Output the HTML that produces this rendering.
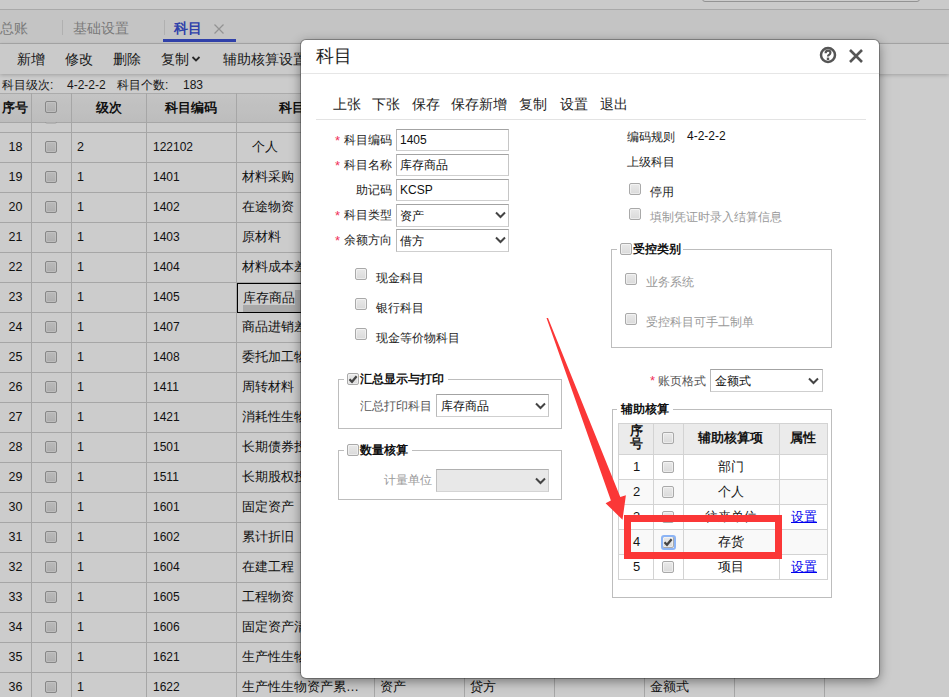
<!DOCTYPE html><html><head><meta charset="utf-8"><style>
*{margin:0;padding:0;box-sizing:border-box}
html,body{width:949px;height:697px;overflow:hidden;background:#fff;font-family:"Liberation Sans",sans-serif;color:#1e1e1e}
.abs{position:absolute}
.t{position:absolute;white-space:nowrap;line-height:1}
.cb{position:absolute;width:12px;height:12px;border:1px solid #a9a9a9;border-radius:2px;background:linear-gradient(#e9e9e9,#dadada);box-shadow:inset 0 0 0 1px rgba(255,255,255,.45)}
.hl{position:absolute;height:1px;background:#d0d0d0}
.vl{position:absolute;width:1px;background:#d0d0d0}
.inp{position:absolute;border:1px solid #b3b3b3;background:#fff;height:22px;width:113px}
.chev{position:absolute}
</style></head><body>
<div class="abs" style="left:0;top:0;width:949px;height:697px;background:#fff">
<div class="abs" style="left:0;top:0;width:949px;height:10px;background:#fdfdfd;border-bottom:1px solid #d4d4d4"></div>
<div class="abs" style="left:702px;top:-10px;width:218px;height:12px;border:1px solid #b8b8b8;border-radius:3px;background:#fff"></div>
<div class="abs" style="left:0;top:10px;width:949px;height:34px;background:#f6f6f6;border-bottom:1px solid #d6d6d6"></div>
<div class="t" style="left:0;top:21px;font-size:14px;color:#9a9a9a">总账</div>
<div class="abs" style="left:62px;top:20px;width:1px;height:15px;background:#dcdcdc"></div>
<div class="t" style="left:73px;top:21px;font-size:14px;color:#9a9a9a">基础设置</div>
<div class="abs" style="left:164px;top:20px;width:1px;height:15px;background:#dcdcdc"></div>
<div class="t" style="left:174px;top:21px;font-size:14px;color:#3d52d5;font-weight:bold">科目</div>
<svg class="abs" style="left:214px;top:23.5px" width="10" height="10"><path d="M0.5 0.5 L9.5 9.5 M9.5 0.5 L0.5 9.5" stroke="#b8b8b8" stroke-width="1.3"/></svg>
<div class="abs" style="left:163px;top:39px;width:73px;height:3px;background:#3d52d5"></div>
<div class="abs" style="left:0;top:44px;width:949px;height:30px;background:#fdfdfd;box-shadow:0 1px 4px rgba(0,0,0,.22)"></div>
<div class="t" style="left:17px;top:52px;font-size:14px;color:#1e1e1e">新增</div>
<div class="t" style="left:65px;top:52px;font-size:14px;color:#1e1e1e">修改</div>
<div class="t" style="left:113px;top:52px;font-size:14px;color:#1e1e1e">删除</div>
<div class="t" style="left:161px;top:52px;font-size:14px;color:#1e1e1e">复制</div>
<div class="t" style="left:223px;top:52px;font-size:14px;color:#1e1e1e">辅助核算设置</div>
<svg class="abs" style="left:191px;top:55px" width="10" height="8"><path d="M1.5 2 L5 5.5 L8.5 2" fill="none" stroke="#333" stroke-width="1.8"/></svg>
<div class="t" style="left:2px;top:79px;font-size:12px;color:#1e1e1e">科目级次:</div>
<div class="t" style="left:67px;top:79px;font-size:12px;color:#1e1e1e">4-2-2-2</div>
<div class="t" style="left:117px;top:79px;font-size:12px;color:#1e1e1e">科目个数:</div>
<div class="t" style="left:183px;top:79px;font-size:12px;color:#1e1e1e">183</div>
<div class="abs" style="left:0;top:93px;width:824px;height:30px;background:linear-gradient(#f5f5f5,#ececec);border-top:1px solid #d6d6d6"></div>
<div class="t" style="left:-2px;top:101px;width:33px;text-align:center;font-size:13px;font-weight:bold;color:#151515">序号</div>
<div class="t" style="left:71px;top:101px;width:75px;text-align:center;font-size:13px;font-weight:bold;color:#151515">级次</div>
<div class="t" style="left:146px;top:101px;width:90px;text-align:center;font-size:13px;font-weight:bold;color:#151515">科目编码</div>
<div class="t" style="left:236px;top:101px;width:138px;text-align:center;font-size:13px;font-weight:bold;color:#151515">科目名称</div>
<div class="t" style="left:374px;top:101px;width:90px;text-align:center;font-size:13px;font-weight:bold;color:#151515">科目类型</div>
<div class="t" style="left:464px;top:101px;width:90px;text-align:center;font-size:13px;font-weight:bold;color:#151515">余额方向</div>
<div class="t" style="left:554px;top:101px;width:90px;text-align:center;font-size:13px;font-weight:bold;color:#151515">数量核算</div>
<div class="t" style="left:644px;top:101px;width:90px;text-align:center;font-size:13px;font-weight:bold;color:#151515">账页格式</div>
<div class="cb" style="left:45px;top:101px"></div>
<div class="hl" style="left:0;top:122px;width:824px"></div>
<div class="cb" style="left:45px;top:112px;clip-path:inset(10px 0 0 0);opacity:.35"></div>
<div class="hl" style="left:0;top:132px;width:824px"></div>
<div class="t" style="left:0;top:141px;width:31px;text-align:center;font-size:12.5px;color:#151515">18</div>
<div class="cb" style="left:45px;top:141px"></div>
<div class="t" style="left:77px;top:141px;font-size:12.5px;color:#151515">2</div>
<div class="t" style="left:153px;top:140px;font-size:12px;color:#151515;transform:scaleY(1.1);transform-origin:0 0">122102</div>
<div class="t" style="left:242px;top:139.5px;font-size:13px;color:#151515"><span style="padding-left:10px">个人</span></div>
<div class="hl" style="left:0;top:162px;width:824px"></div>
<div class="t" style="left:0;top:171px;width:31px;text-align:center;font-size:12.5px;color:#151515">19</div>
<div class="cb" style="left:45px;top:171px"></div>
<div class="t" style="left:77px;top:171px;font-size:12.5px;color:#151515">1</div>
<div class="t" style="left:153px;top:170px;font-size:12px;color:#151515;transform:scaleY(1.1);transform-origin:0 0">1401</div>
<div class="t" style="left:242px;top:169.5px;font-size:13px;color:#151515">材料采购</div>
<div class="hl" style="left:0;top:192px;width:824px"></div>
<div class="t" style="left:0;top:201px;width:31px;text-align:center;font-size:12.5px;color:#151515">20</div>
<div class="cb" style="left:45px;top:201px"></div>
<div class="t" style="left:77px;top:201px;font-size:12.5px;color:#151515">1</div>
<div class="t" style="left:153px;top:200px;font-size:12px;color:#151515;transform:scaleY(1.1);transform-origin:0 0">1402</div>
<div class="t" style="left:242px;top:199.5px;font-size:13px;color:#151515">在途物资</div>
<div class="hl" style="left:0;top:222px;width:824px"></div>
<div class="t" style="left:0;top:231px;width:31px;text-align:center;font-size:12.5px;color:#151515">21</div>
<div class="cb" style="left:45px;top:231px"></div>
<div class="t" style="left:77px;top:231px;font-size:12.5px;color:#151515">1</div>
<div class="t" style="left:153px;top:230px;font-size:12px;color:#151515;transform:scaleY(1.1);transform-origin:0 0">1403</div>
<div class="t" style="left:242px;top:229.5px;font-size:13px;color:#151515">原材料</div>
<div class="hl" style="left:0;top:252px;width:824px"></div>
<div class="t" style="left:0;top:261px;width:31px;text-align:center;font-size:12.5px;color:#151515">22</div>
<div class="cb" style="left:45px;top:261px"></div>
<div class="t" style="left:77px;top:261px;font-size:12.5px;color:#151515">1</div>
<div class="t" style="left:153px;top:260px;font-size:12px;color:#151515;transform:scaleY(1.1);transform-origin:0 0">1404</div>
<div class="t" style="left:242px;top:259.5px;font-size:13px;color:#151515">材料成本差异</div>
<div class="hl" style="left:0;top:282px;width:824px"></div>
<div class="t" style="left:0;top:291px;width:31px;text-align:center;font-size:12.5px;color:#151515">23</div>
<div class="cb" style="left:45px;top:291px"></div>
<div class="t" style="left:77px;top:291px;font-size:12.5px;color:#151515">1</div>
<div class="t" style="left:153px;top:290px;font-size:12px;color:#151515;transform:scaleY(1.1);transform-origin:0 0">1405</div>
<div class="t" style="left:242px;top:289.5px;font-size:13px;color:#151515"></div>
<div class="hl" style="left:0;top:312px;width:824px"></div>
<div class="t" style="left:0;top:321px;width:31px;text-align:center;font-size:12.5px;color:#151515">24</div>
<div class="cb" style="left:45px;top:321px"></div>
<div class="t" style="left:77px;top:321px;font-size:12.5px;color:#151515">1</div>
<div class="t" style="left:153px;top:320px;font-size:12px;color:#151515;transform:scaleY(1.1);transform-origin:0 0">1407</div>
<div class="t" style="left:242px;top:319.5px;font-size:13px;color:#151515">商品进销差价</div>
<div class="hl" style="left:0;top:342px;width:824px"></div>
<div class="t" style="left:0;top:351px;width:31px;text-align:center;font-size:12.5px;color:#151515">25</div>
<div class="cb" style="left:45px;top:351px"></div>
<div class="t" style="left:77px;top:351px;font-size:12.5px;color:#151515">1</div>
<div class="t" style="left:153px;top:350px;font-size:12px;color:#151515;transform:scaleY(1.1);transform-origin:0 0">1408</div>
<div class="t" style="left:242px;top:349.5px;font-size:13px;color:#151515">委托加工物资</div>
<div class="hl" style="left:0;top:372px;width:824px"></div>
<div class="t" style="left:0;top:381px;width:31px;text-align:center;font-size:12.5px;color:#151515">26</div>
<div class="cb" style="left:45px;top:381px"></div>
<div class="t" style="left:77px;top:381px;font-size:12.5px;color:#151515">1</div>
<div class="t" style="left:153px;top:380px;font-size:12px;color:#151515;transform:scaleY(1.1);transform-origin:0 0">1411</div>
<div class="t" style="left:242px;top:379.5px;font-size:13px;color:#151515">周转材料</div>
<div class="hl" style="left:0;top:402px;width:824px"></div>
<div class="t" style="left:0;top:411px;width:31px;text-align:center;font-size:12.5px;color:#151515">27</div>
<div class="cb" style="left:45px;top:411px"></div>
<div class="t" style="left:77px;top:411px;font-size:12.5px;color:#151515">1</div>
<div class="t" style="left:153px;top:410px;font-size:12px;color:#151515;transform:scaleY(1.1);transform-origin:0 0">1421</div>
<div class="t" style="left:242px;top:409.5px;font-size:13px;color:#151515">消耗性生物资产</div>
<div class="hl" style="left:0;top:432px;width:824px"></div>
<div class="t" style="left:0;top:441px;width:31px;text-align:center;font-size:12.5px;color:#151515">28</div>
<div class="cb" style="left:45px;top:441px"></div>
<div class="t" style="left:77px;top:441px;font-size:12.5px;color:#151515">1</div>
<div class="t" style="left:153px;top:440px;font-size:12px;color:#151515;transform:scaleY(1.1);transform-origin:0 0">1501</div>
<div class="t" style="left:242px;top:439.5px;font-size:13px;color:#151515">长期债券投资</div>
<div class="hl" style="left:0;top:462px;width:824px"></div>
<div class="t" style="left:0;top:471px;width:31px;text-align:center;font-size:12.5px;color:#151515">29</div>
<div class="cb" style="left:45px;top:471px"></div>
<div class="t" style="left:77px;top:471px;font-size:12.5px;color:#151515">1</div>
<div class="t" style="left:153px;top:470px;font-size:12px;color:#151515;transform:scaleY(1.1);transform-origin:0 0">1511</div>
<div class="t" style="left:242px;top:469.5px;font-size:13px;color:#151515">长期股权投资</div>
<div class="hl" style="left:0;top:492px;width:824px"></div>
<div class="t" style="left:0;top:501px;width:31px;text-align:center;font-size:12.5px;color:#151515">30</div>
<div class="cb" style="left:45px;top:501px"></div>
<div class="t" style="left:77px;top:501px;font-size:12.5px;color:#151515">1</div>
<div class="t" style="left:153px;top:500px;font-size:12px;color:#151515;transform:scaleY(1.1);transform-origin:0 0">1601</div>
<div class="t" style="left:242px;top:499.5px;font-size:13px;color:#151515">固定资产</div>
<div class="hl" style="left:0;top:522px;width:824px"></div>
<div class="t" style="left:0;top:531px;width:31px;text-align:center;font-size:12.5px;color:#151515">31</div>
<div class="cb" style="left:45px;top:531px"></div>
<div class="t" style="left:77px;top:531px;font-size:12.5px;color:#151515">1</div>
<div class="t" style="left:153px;top:530px;font-size:12px;color:#151515;transform:scaleY(1.1);transform-origin:0 0">1602</div>
<div class="t" style="left:242px;top:529.5px;font-size:13px;color:#151515">累计折旧</div>
<div class="hl" style="left:0;top:552px;width:824px"></div>
<div class="t" style="left:0;top:561px;width:31px;text-align:center;font-size:12.5px;color:#151515">32</div>
<div class="cb" style="left:45px;top:561px"></div>
<div class="t" style="left:77px;top:561px;font-size:12.5px;color:#151515">1</div>
<div class="t" style="left:153px;top:560px;font-size:12px;color:#151515;transform:scaleY(1.1);transform-origin:0 0">1604</div>
<div class="t" style="left:242px;top:559.5px;font-size:13px;color:#151515">在建工程</div>
<div class="hl" style="left:0;top:582px;width:824px"></div>
<div class="t" style="left:0;top:591px;width:31px;text-align:center;font-size:12.5px;color:#151515">33</div>
<div class="cb" style="left:45px;top:591px"></div>
<div class="t" style="left:77px;top:591px;font-size:12.5px;color:#151515">1</div>
<div class="t" style="left:153px;top:590px;font-size:12px;color:#151515;transform:scaleY(1.1);transform-origin:0 0">1605</div>
<div class="t" style="left:242px;top:589.5px;font-size:13px;color:#151515">工程物资</div>
<div class="hl" style="left:0;top:612px;width:824px"></div>
<div class="t" style="left:0;top:621px;width:31px;text-align:center;font-size:12.5px;color:#151515">34</div>
<div class="cb" style="left:45px;top:621px"></div>
<div class="t" style="left:77px;top:621px;font-size:12.5px;color:#151515">1</div>
<div class="t" style="left:153px;top:620px;font-size:12px;color:#151515;transform:scaleY(1.1);transform-origin:0 0">1606</div>
<div class="t" style="left:242px;top:619.5px;font-size:13px;color:#151515">固定资产清理</div>
<div class="hl" style="left:0;top:642px;width:824px"></div>
<div class="t" style="left:0;top:651px;width:31px;text-align:center;font-size:12.5px;color:#151515">35</div>
<div class="cb" style="left:45px;top:651px"></div>
<div class="t" style="left:77px;top:651px;font-size:12.5px;color:#151515">1</div>
<div class="t" style="left:153px;top:650px;font-size:12px;color:#151515;transform:scaleY(1.1);transform-origin:0 0">1621</div>
<div class="t" style="left:242px;top:649.5px;font-size:13px;color:#151515">生产性生物资产</div>
<div class="hl" style="left:0;top:672px;width:824px"></div>
<div class="t" style="left:0;top:681px;width:31px;text-align:center;font-size:12.5px;color:#151515">36</div>
<div class="cb" style="left:45px;top:681px"></div>
<div class="t" style="left:77px;top:681px;font-size:12.5px;color:#151515">1</div>
<div class="t" style="left:153px;top:680px;font-size:12px;color:#151515;transform:scaleY(1.1);transform-origin:0 0">1622</div>
<div class="t" style="left:242px;top:679.5px;font-size:13px;color:#151515">生产性生物资产累…</div>
<div class="t" style="left:380px;top:679.5px;font-size:13px;color:#151515">资产</div>
<div class="t" style="left:470px;top:679.5px;font-size:13px;color:#151515">贷方</div>
<div class="t" style="left:650px;top:679.5px;font-size:13px;color:#151515">金额式</div>
<div class="vl" style="left:31px;top:93px;height:604px"></div>
<div class="vl" style="left:71px;top:93px;height:604px"></div>
<div class="vl" style="left:146px;top:93px;height:604px"></div>
<div class="vl" style="left:236px;top:93px;height:604px"></div>
<div class="vl" style="left:374px;top:93px;height:604px"></div>
<div class="vl" style="left:464px;top:93px;height:604px"></div>
<div class="vl" style="left:554px;top:93px;height:604px"></div>
<div class="vl" style="left:644px;top:93px;height:604px"></div>
<div class="vl" style="left:734px;top:93px;height:604px"></div>
<div class="vl" style="left:824px;top:93px;height:604px"></div>
<div class="abs" style="left:237px;top:283px;width:140px;height:30px;border:1px solid #000"></div>
<div class="abs" style="left:243px;top:290px;width:100px;height:22px;background:#d4d4d4"></div>
<div class="abs" style="left:243px;top:290px;width:52px;height:15px;background:#fff"></div>
<div class="t" style="left:243px;top:291px;font-size:13px;color:#151515">库存商品</div>
</div>
<div class="abs" style="left:0;top:0;width:949px;height:697px;background:rgba(0,0,0,.2)"></div>
<div class="abs" style="left:301px;top:40px;width:578px;height:638px;background:#fff;border-radius:5px;box-shadow:0 3px 12px rgba(0,0,0,.45),0 0 0 1px rgba(0,0,0,.28)">
<div class="t" style="left:15px;top:7px;font-size:18px;color:#1e1e1e;">科目</div>
<div class="abs" style="left:0px;top:33px;width:578px;height:1px;background:#e6e6e6"></div>
<svg class="abs" style="left:518px;top:6px" width="18" height="18"><circle cx="9" cy="9" r="7" fill="none" stroke="#555" stroke-width="2.5"/><path d="M6.6 7.2 Q6.6 4.6 9 4.6 Q11.4 4.6 11.4 6.8 Q11.4 8.2 9.9 8.9 Q9 9.4 9 10.6" fill="none" stroke="#555" stroke-width="2.2"/><rect x="7.8" y="11.6" width="2.4" height="2.4" fill="#555"/></svg>
<svg class="abs" style="left:548px;top:9px" width="14" height="14"><path d="M1 1 L13 13 M13 1 L1 13" stroke="#555" stroke-width="2.6"/></svg>
<div class="t" style="left:32px;top:57px;font-size:14px;color:#1e1e1e;">上张</div>
<div class="t" style="left:71px;top:57px;font-size:14px;color:#1e1e1e;">下张</div>
<div class="t" style="left:111px;top:57px;font-size:14px;color:#1e1e1e;">保存</div>
<div class="t" style="left:150px;top:57px;font-size:14px;color:#1e1e1e;">保存新增</div>
<div class="t" style="left:218px;top:57px;font-size:14px;color:#1e1e1e;">复制</div>
<div class="t" style="left:259px;top:57px;font-size:14px;color:#1e1e1e;">设置</div>
<div class="t" style="left:299px;top:57px;font-size:14px;color:#1e1e1e;">退出</div>
<div class="abs" style="left:15px;top:79px;width:550px;height:1px;background:#e3e3e3"></div>
<div class="t" style="left:34px;top:93.5px;font-size:13px;color:#f0305a;">*</div>
<div class="t" style="left:-1px;top:94px;width:92px;text-align:right;font-size:12px;color:#1e1e1e">科目编码</div>
<div class="abs" style="left:95px;top:89px;width:113px;height:22px;border:1px solid;border-color:#a3a3a3 #c6c6c6 #cfcfcf #b9b9b9;background:#fff"></div>
<div class="t" style="left:99px;top:94px;font-size:12px;color:#111;">1405</div>
<div class="t" style="left:34px;top:118.5px;font-size:13px;color:#f0305a;">*</div>
<div class="t" style="left:-1px;top:119px;width:92px;text-align:right;font-size:12px;color:#1e1e1e">科目名称</div>
<div class="abs" style="left:95px;top:114px;width:113px;height:22px;border:1px solid;border-color:#a3a3a3 #c6c6c6 #cfcfcf #b9b9b9;background:#fff"></div>
<div class="t" style="left:99px;top:119px;font-size:12px;color:#111;">库存商品</div>
<div class="t" style="left:-1px;top:144px;width:92px;text-align:right;font-size:12px;color:#1e1e1e">助记码</div>
<div class="abs" style="left:95px;top:139px;width:113px;height:22px;border:1px solid;border-color:#a3a3a3 #c6c6c6 #cfcfcf #b9b9b9;background:#fff"></div>
<div class="t" style="left:99px;top:144px;font-size:12px;color:#111;">KCSP</div>
<div class="t" style="left:34px;top:168.5px;font-size:13px;color:#f0305a;">*</div>
<div class="t" style="left:-1px;top:169px;width:92px;text-align:right;font-size:12px;color:#1e1e1e">科目类型</div>
<div class="abs" style="left:95px;top:164px;width:113px;height:23px;border:1px solid;border-color:#a3a3a3 #c6c6c6 #cfcfcf #b9b9b9;background:#fff"></div>
<div class="t" style="left:99px;top:170px;font-size:12px;color:#111;">资产</div>
<svg class="abs" style="left:194px;top:171px" width="11" height="8"><path d="M1 1.5 L5.5 6 L10 1.5" fill="none" stroke="#444" stroke-width="2"/></svg>
<div class="t" style="left:34px;top:193.5px;font-size:13px;color:#f0305a;">*</div>
<div class="t" style="left:-1px;top:194px;width:92px;text-align:right;font-size:12px;color:#1e1e1e">余额方向</div>
<div class="abs" style="left:95px;top:189px;width:113px;height:23px;border:1px solid;border-color:#a3a3a3 #c6c6c6 #cfcfcf #b9b9b9;background:#fff"></div>
<div class="t" style="left:99px;top:195px;font-size:12px;color:#111;">借方</div>
<svg class="abs" style="left:194px;top:196px" width="11" height="8"><path d="M1 1.5 L5.5 6 L10 1.5" fill="none" stroke="#444" stroke-width="2"/></svg>
<div class="cb" style="left:54px;top:228px"></div>
<div class="t" style="left:75px;top:232px;font-size:12px;color:#1e1e1e;">现金科目</div>
<div class="cb" style="left:54px;top:258px"></div>
<div class="t" style="left:75px;top:262px;font-size:12px;color:#1e1e1e;">银行科目</div>
<div class="cb" style="left:54px;top:288px"></div>
<div class="t" style="left:75px;top:292px;font-size:12px;color:#1e1e1e;">现金等价物科目</div>
<div class="abs" style="left:37px;top:339px;width:224px;height:50px;border:1px solid #bdbdbd"></div>
<div class="abs" style="left:43px;top:332px;width:104px;height:14px;background:#fff"></div>
<div class="cb" style="left:46px;top:333px"></div>
<svg class="abs" style="left:46px;top:333px" width="12" height="12"><path d="M2.5 6.2 L5 8.8 L9.6 3.2" fill="none" stroke="#444" stroke-width="2.2"/></svg>
<div class="t" style="left:59px;top:333px;font-size:12px;color:#111;font-weight:bold">汇总显示与打印</div>
<div class="t" style="left:59px;top:360px;font-size:12px;color:#555;">汇总打印科目</div>
<div class="abs" style="left:135px;top:354px;width:113px;height:23px;border:1px solid;border-color:#a3a3a3 #c6c6c6 #cfcfcf #b9b9b9;background:#fff"></div>
<div class="t" style="left:140px;top:360px;font-size:12px;color:#111;">库存商品</div>
<svg class="abs" style="left:233.5px;top:362px" width="11" height="8"><path d="M1 1.5 L5.5 6 L10 1.5" fill="none" stroke="#444" stroke-width="2"/></svg>
<div class="abs" style="left:37px;top:410px;width:224px;height:50px;border:1px solid #bdbdbd"></div>
<div class="abs" style="left:43px;top:403px;width:68px;height:14px;background:#fff"></div>
<div class="cb" style="left:46px;top:404px"></div>
<div class="t" style="left:59px;top:404px;font-size:12px;color:#111;font-weight:bold">数量核算</div>
<div class="t" style="left:83px;top:434px;font-size:12px;color:#999;">计量单位</div>
<div class="abs" style="left:135px;top:429px;width:113px;height:23px;border:1px solid;border-color:#b0b0b0 #cccccc #d4d4d4 #c0c0c0;background:#e8e8e8"></div>
<svg class="abs" style="left:233.5px;top:437px" width="11" height="8"><path d="M1 1.5 L5.5 6 L10 1.5" fill="none" stroke="#444" stroke-width="2"/></svg>
<div class="t" style="left:326px;top:91px;font-size:12px;color:#1e1e1e;">编码规则</div>
<div class="t" style="left:386px;top:90px;font-size:12px;color:#111;">4-2-2-2</div>
<div class="t" style="left:326px;top:116px;font-size:12px;color:#1e1e1e;">上级科目</div>
<div class="cb" style="left:328px;top:143px"></div>
<div class="t" style="left:349px;top:146px;font-size:12px;color:#1e1e1e;">停用</div>
<div class="cb" style="left:328px;top:168px"></div>
<div class="t" style="left:349px;top:171px;font-size:12px;color:#999;">填制凭证时录入结算信息</div>
<div class="abs" style="left:310px;top:209px;width:221px;height:99px;border:1px solid #bdbdbd"></div>
<div class="abs" style="left:316px;top:202px;width:66px;height:14px;background:#fff"></div>
<div class="cb" style="left:319px;top:203px"></div>
<div class="t" style="left:332px;top:203px;font-size:12px;color:#111;font-weight:bold">受控类别</div>
<div class="cb" style="left:324px;top:233px"></div>
<div class="t" style="left:345px;top:236px;font-size:12px;color:#999;">业务系统</div>
<div class="cb" style="left:324px;top:273px"></div>
<div class="t" style="left:345px;top:276px;font-size:12px;color:#999;">受控科目可手工制单</div>
<div class="t" style="left:349px;top:333.5px;font-size:13px;color:#f0305a;">*</div>
<div class="t" style="left:357px;top:335px;font-size:12px;color:#555;">账页格式</div>
<div class="abs" style="left:409px;top:329px;width:113px;height:23px;border:1px solid;border-color:#a3a3a3 #c6c6c6 #cfcfcf #b9b9b9;background:#fff"></div>
<div class="t" style="left:414px;top:335px;font-size:12px;color:#111;">金额式</div>
<svg class="abs" style="left:507px;top:337px" width="11" height="8"><path d="M1 1.5 L5.5 6 L10 1.5" fill="none" stroke="#444" stroke-width="2"/></svg>
<div class="abs" style="left:311px;top:369px;width:220px;height:189px;border:1px solid #bdbdbd"></div>
<div class="abs" style="left:316px;top:363px;width:56px;height:14px;background:#fff"></div>
<div class="t" style="left:320px;top:363px;font-size:12px;color:#111;font-weight:bold">辅助核算</div>
<div class="abs" style="left:317px;top:383px;width:209px;height:31px;background:#ebebeb"></div>
<div class="abs" style="left:318px;top:440px;width:208px;height:24px;background:#f9f9f9"></div>
<div class="abs" style="left:318px;top:490px;width:208px;height:24px;background:#f9f9f9"></div>
<div class="abs" style="left:317px;top:383px;width:210px;height:1px;background:#d3d3d3"></div>
<div class="abs" style="left:317px;top:414px;width:210px;height:1px;background:#d3d3d3"></div>
<div class="abs" style="left:317px;top:439px;width:210px;height:1px;background:#d3d3d3"></div>
<div class="abs" style="left:317px;top:464px;width:210px;height:1px;background:#d3d3d3"></div>
<div class="abs" style="left:317px;top:489px;width:210px;height:1px;background:#d3d3d3"></div>
<div class="abs" style="left:317px;top:514px;width:210px;height:1px;background:#d3d3d3"></div>
<div class="abs" style="left:317px;top:539px;width:210px;height:1px;background:#d3d3d3"></div>
<div class="abs" style="left:317px;top:383px;width:1px;height:157px;background:#d3d3d3"></div>
<div class="abs" style="left:352px;top:383px;width:1px;height:157px;background:#d3d3d3"></div>
<div class="abs" style="left:382px;top:383px;width:1px;height:157px;background:#d3d3d3"></div>
<div class="abs" style="left:478px;top:383px;width:1px;height:157px;background:#d3d3d3"></div>
<div class="abs" style="left:526px;top:383px;width:1px;height:157px;background:#d3d3d3"></div>
<div class="t" style="left:317px;top:384px;width:36px;text-align:center;font-size:13px;font-weight:bold;color:#151515;line-height:13px">序<br>号</div>
<div class="cb" style="left:361px;top:392px"></div>
<div class="t" style="left:397px;top:391px;font-size:13px;color:#151515;font-weight:bold">辅助核算项</div>
<div class="t" style="left:489px;top:391px;font-size:13px;color:#151515;font-weight:bold">属性</div>
<div class="t" style="left:318px;top:420px;width:35px;text-align:center;font-size:13px;color:#151515">1</div>
<div class="cb" style="left:361px;top:421px"></div>
<div class="t" style="left:382px;top:420px;width:96px;text-align:center;font-size:13px;color:#151515">部门</div>
<div class="t" style="left:318px;top:445px;width:35px;text-align:center;font-size:13px;color:#151515">2</div>
<div class="cb" style="left:361px;top:446px"></div>
<div class="t" style="left:382px;top:445px;width:96px;text-align:center;font-size:13px;color:#151515">个人</div>
<div class="t" style="left:318px;top:470px;width:35px;text-align:center;font-size:13px;color:#151515">3</div>
<div class="cb" style="left:361px;top:471px"></div>
<div class="t" style="left:382px;top:470px;width:96px;text-align:center;font-size:13px;color:#151515">往来单位</div>
<div class="t" style="left:490px;top:470px;font-size:13px;color:#0000ee;text-decoration:underline">设置</div>
<div class="t" style="left:318px;top:495px;width:35px;text-align:center;font-size:13px;color:#151515">4</div>
<div class="cb" style="left:361px;top:496px"></div>
<svg class="abs" style="left:361px;top:496px" width="12" height="12"><path d="M2.5 6.2 L5 8.8 L9.6 3.2" fill="none" stroke="#444" stroke-width="2.2"/></svg>
<div class="t" style="left:382px;top:495px;width:96px;text-align:center;font-size:13px;color:#151515">存货</div>
<div class="t" style="left:318px;top:520px;width:35px;text-align:center;font-size:13px;color:#151515">5</div>
<div class="cb" style="left:361px;top:521px"></div>
<div class="t" style="left:382px;top:520px;width:96px;text-align:center;font-size:13px;color:#151515">项目</div>
<div class="t" style="left:490px;top:520px;font-size:13px;color:#0000ee;text-decoration:underline">设置</div>
<div class="abs" style="left:360px;top:495px;width:15px;height:15px;border:2px solid #8cb4f5;border-radius:3px"></div>
<div class="abs" style="left:323px;top:475px;width:158px;height:44px;border:7px solid #fb3737"></div>
<svg class="abs" style="left:-301px;top:-40px" width="949" height="697"><path d="M546.5 318 L548 318 L620.3 497.1 L625.9 495.2 L622.5 519.7 L605.6 503.2 L610.9 500.6 Z" fill="#fb3737"/></svg>
</div>
</body></html>
